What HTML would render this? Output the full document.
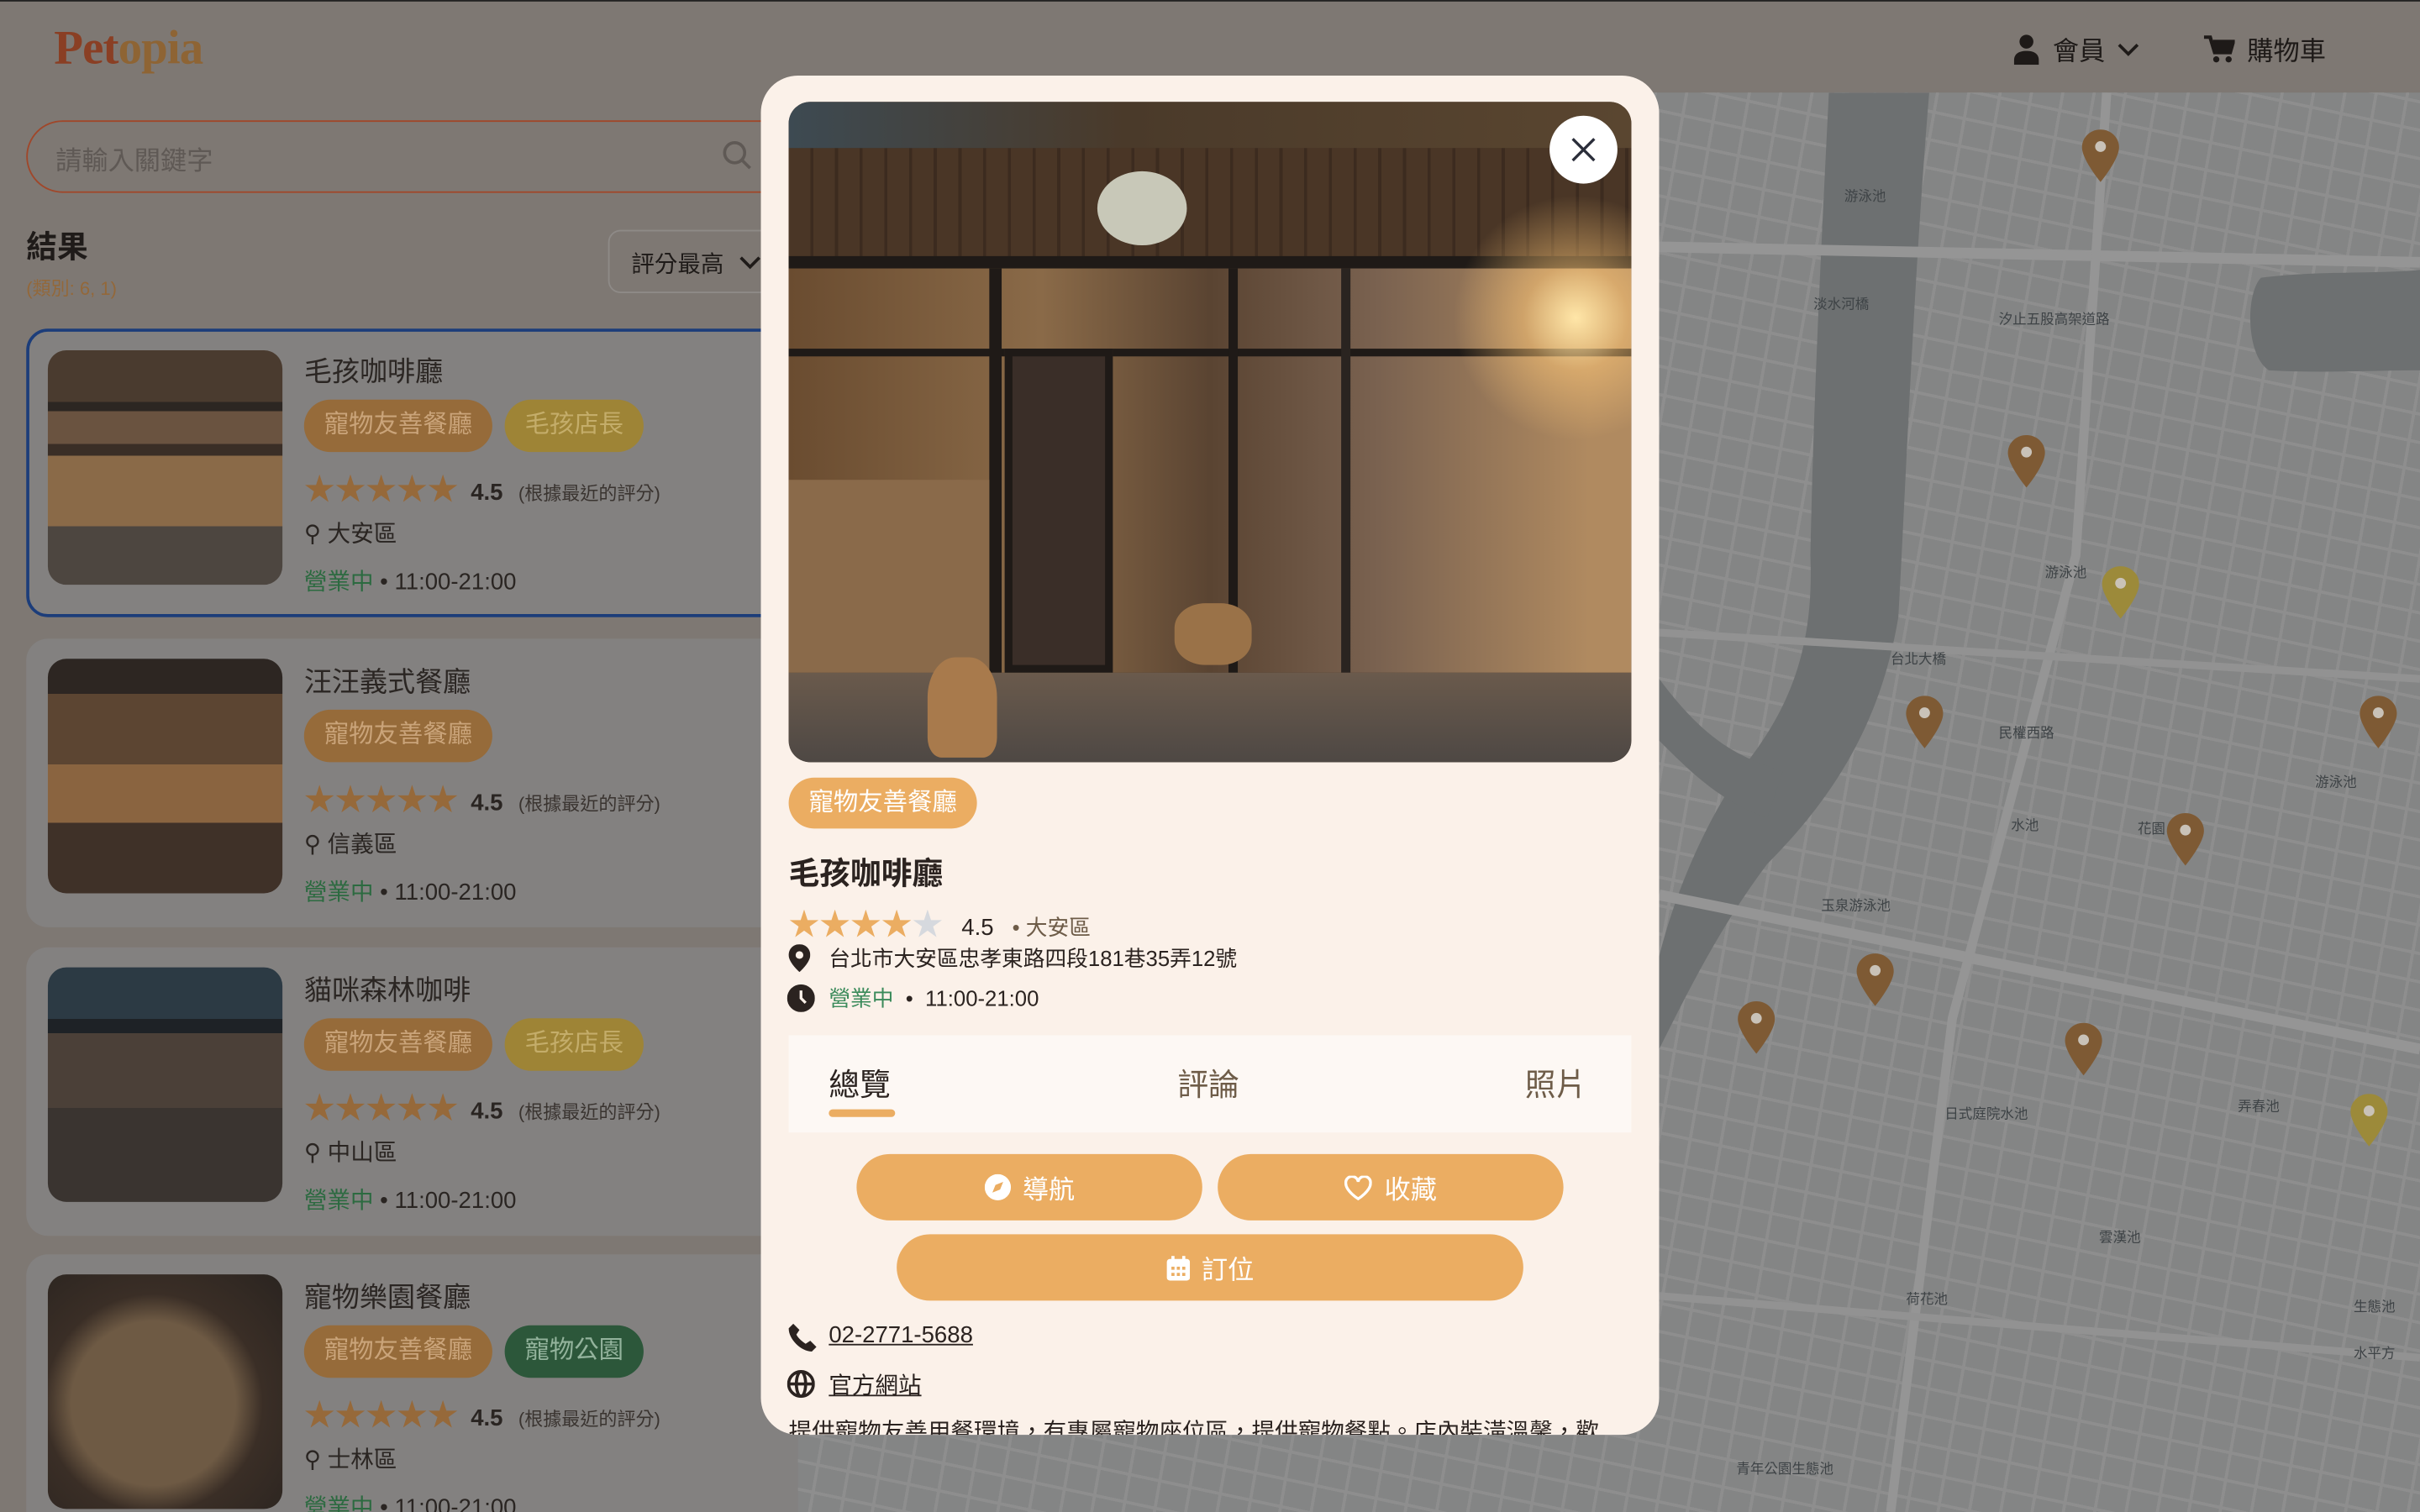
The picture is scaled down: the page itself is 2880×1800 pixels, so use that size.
<!DOCTYPE html>
<html><head><meta charset="utf-8">
<style>
*{box-sizing:border-box;margin:0;padding:0}
html,body{width:2880px;height:1800px;overflow:hidden;background:#7e7873}
#w{width:1568px;height:980px;transform:scale(1.836735);transform-origin:0 0;position:relative;font-family:"Liberation Sans","Noto Sans CJK TC",sans-serif;color:#2a2522;background:#7e7873;overflow:hidden}
.abs{position:absolute}
.map{left:505px;top:60px;width:1063px;height:920px;background:#848585;overflow:hidden;
background-image:repeating-linear-gradient(12deg,transparent 0 16px,#8e8e8e 16px 18px),repeating-linear-gradient(100deg,transparent 0 18px,#8e8e8e 18px 20px)}
.card{left:17px;width:500px;height:187px;background:#838180;border-radius:14px}
.thumb{left:14px;top:13px;width:152px;height:152px;border-radius:12px;overflow:hidden}
.nm{left:180px;top:14px;font-size:18px;color:#2b2623}
.tags{left:180px;top:46px;display:flex;gap:8px}
.tag{height:34px;line-height:34px;padding:0 13px;border-radius:17px;font-size:16px}
.to{background:#966b3a;color:#caa47a}.ty{background:#9e8436;color:#c4ad6a}.tg{background:#2c573a;color:#93b39c}
.st{left:180px;top:88px;font-size:20px;color:#96693a;letter-spacing:0}
.st b{color:#2a2522;font-size:15px;margin-left:8px;letter-spacing:0}
.st i{font-style:normal;color:#3a3430;font-size:12px;margin-left:10px;letter-spacing:0}
.ds{left:180px;top:122px;font-size:15px}
.hr{left:180px;top:153px;font-size:15px}
.hr span{color:#2c6a40}
.modal{left:493px;top:49px;width:582px;height:881px;background:#fbf1e9;border-radius:24px;overflow:hidden}
.btn{position:absolute;background:#ebad62;color:#fff;border-radius:22px;height:43px;display:flex;align-items:center;justify-content:center;gap:8px;font-size:17px}
</style></head><body><div id="w">
<div class="abs" style="left:0;top:0;width:1568px;height:1px;background:#222"></div>
<div class="abs" style="left:35px;top:13px;font-family:'Liberation Serif',serif;font-weight:bold;font-size:31px;color:#8a3f24;letter-spacing:-0.5px">Pet<span style="color:#8e6434">opia</span></div>
<div class="abs" style="left:1304px;top:19px;font-size:17px;display:flex;align-items:center;gap:8px;color:#1e1a18">
<svg width="18" height="20" viewBox="0 0 18 20"><circle cx="9" cy="5" r="4.5" fill="#1e1a18"/><path d="M1 20v-3c0-4 3-6 8-6s8 2 8 6v3z" fill="#1e1a18"/></svg>會員
<svg width="14" height="10" viewBox="0 0 14 10"><path d="M1 2l6 6 6-6" stroke="#1e1a18" stroke-width="2" fill="none"/></svg></div>
<div class="abs" style="left:1428px;top:19px;font-size:17px;display:flex;align-items:center;gap:8px;color:#1e1a18">
<svg width="20" height="18" viewBox="0 0 20 18"><path d="M0 1h4l3 10h10l2-7H6" stroke="#1e1a18" stroke-width="2.4" fill="none"/><path d="M5 4h14l-2 7H7z" fill="#1e1a18"/><circle cx="8" cy="15.5" r="2" fill="#1e1a18"/><circle cx="16" cy="15.5" r="2" fill="#1e1a18"/></svg>購物車</div>
<div class="abs map">
<svg width="1063" height="920" style="position:absolute;left:0;top:0">
<path d="M680 0 L745 0 C735 120 730 250 725 340 C715 400 690 450 640 500 C610 540 590 580 570 620 L570 560 C580 520 600 470 630 430 C660 390 670 350 668 300 C670 200 675 100 680 0Z" fill="#6d7071"/>
<path d="M570 380 C600 420 620 430 650 440 L640 470 C610 460 590 440 570 420Z" fill="#6d7071"/>
<path d="M960 120 C1000 115 1030 118 1063 115 L1063 180 C1030 180 1000 182 965 180 C950 170 950 130 960 120Z" fill="#6d7071"/>
<path d="M570 100 L1063 110" stroke="#959595" stroke-width="7" fill="none"/>
<path d="M570 520 L1063 620" stroke="#959595" stroke-width="7" fill="none"/>
<path d="M860 0 L840 300 L760 600 L720 920" stroke="#959595" stroke-width="6" fill="none"/>
<path d="M570 350 L1063 380" stroke="#929292" stroke-width="5" fill="none"/>
<path d="M570 780 L1063 820" stroke="#929292" stroke-width="5" fill="none"/>
<g font-size="9" fill="#3e4346" font-family="Noto Sans CJK TC">
<text x="690" y="70">游泳池</text><text x="820" y="314">游泳池</text><text x="720" y="370">台北大橋</text><text x="790" y="418">民權西路</text><text x="798" y="478">水池</text><text x="675" y="530">玉泉游泳池</text><text x="880" y="480">花園</text><text x="755" y="665">日式庭院水池</text><text x="945" y="660">弄春池</text><text x="855" y="745">雲漢池</text><text x="730" y="785">荷花池</text><text x="1020" y="820">水平方</text><text x="620" y="895">青年公園生態池</text><text x="995" y="450">游泳池</text><text x="1020" y="790">生態池</text><text x="670" y="140">淡水河橋</text><text x="790" y="150">汐止五股高架道路</text>
</g></svg>
</div>
<svg class="abs" style="left:0;top:0" width="1568" height="980">
<defs><g id="p"><path d="M0 0c-6.6 0-12 5-12 11.5 0 8 12 22.5 12 22.5s12-14.5 12-22.5C12 5 6.6 0 0 0z"/><circle cx="0" cy="11" r="3.5" fill="#c9c2b8"/></g></defs>
<g fill="#7e5a34"><use href="#p" x="1361" y="84"/><use href="#p" x="1313" y="282"/><use href="#p" x="1247" y="451"/><use href="#p" x="1541" y="451"/><use href="#p" x="1416" y="527"/><use href="#p" x="1215" y="618"/><use href="#p" x="1138" y="649"/><use href="#p" x="1350" y="663"/></g>
<g fill="#9c8a3a"><use href="#p" x="1374" y="367"/><use href="#p" x="1535" y="709"/></g>
</svg>
<div class="abs" style="left:17px;top:78px;width:500px;height:47px;border:1.5px solid #a0472a;border-radius:24px"></div>
<div class="abs" style="left:36px;top:90px;font-size:17px;color:#5f5955">請輸入關鍵字</div>
<svg class="abs" style="left:468px;top:91px" width="20" height="20" viewBox="0 0 20 20"><circle cx="8" cy="8" r="6.5" stroke="#5f5955" stroke-width="2" fill="none"/><path d="M13 13l5 5" stroke="#5f5955" stroke-width="2"/></svg>
<div class="abs" style="left:17px;top:144px;font-size:20px;font-weight:bold;color:#1f1b19">結果</div>
<div class="abs" style="left:17px;top:178px;font-size:12px;color:#93683a">(類別: 6, 1)</div>
<div class="abs" style="left:394px;top:149px;width:130px;height:41px;border:1px solid #8e8a87;border-radius:8px"></div>
<div class="abs" style="left:409px;top:160px;font-size:15px;color:#1f1b19">評分最高</div>
<svg class="abs" style="left:479px;top:165px" width="14" height="10" viewBox="0 0 14 10"><path d="M1 2l6 6 6-6" stroke="#1f1b19" stroke-width="2" fill="none"/></svg>

<div class="abs card" style="top:213px;border:2px solid #1c3d7a">
<div class="abs thumb" style="left:12px;top:12px;background:linear-gradient(#4a3b2f 0 22%,#2c2622 22% 26%,#6a5340 26% 40%,#3a2e26 40% 45%,#8a6a48 45% 75%,#4d4640 75%)"></div>
<div class="abs nm" style="left:178px;top:12px">毛孩咖啡廳</div>
<div class="abs tags" style="left:178px;top:44px"><div class="tag to">寵物友善餐廳</div><div class="tag ty">毛孩店長</div></div>
<div class="abs st" style="left:178px;top:86px">★★★★★<b>4.5</b><i>(根據最近的評分)</i></div>
<div class="abs ds" style="left:178px;top:120px">⚲ 大安區</div>
<div class="abs hr" style="left:178px;top:151px"><span>營業中</span> • 11:00-21:00</div>
</div>
<div class="abs card" style="top:414px">
<div class="abs thumb" style="background:linear-gradient(#2d2622 0 15%,#5c4532 15% 45%,#8a6440 45% 70%,#3f3128 70%)"></div>
<div class="abs nm">汪汪義式餐廳</div>
<div class="abs tags"><div class="tag to">寵物友善餐廳</div></div>
<div class="abs st">★★★★★<b>4.5</b><i>(根據最近的評分)</i></div>
<div class="abs ds">⚲ 信義區</div>
<div class="abs hr"><span>營業中</span> • 11:00-21:00</div>
</div>
<div class="abs card" style="top:614px">
<div class="abs thumb" style="background:linear-gradient(#2c3a44 0 22%,#1e2226 22% 28%,#4b4038 28% 60%,#3a3430 60%)"></div>
<div class="abs nm">貓咪森林咖啡</div>
<div class="abs tags"><div class="tag to">寵物友善餐廳</div><div class="tag ty">毛孩店長</div></div>
<div class="abs st">★★★★★<b>4.5</b><i>(根據最近的評分)</i></div>
<div class="abs ds">⚲ 中山區</div>
<div class="abs hr"><span>營業中</span> • 11:00-21:00</div>
</div>
<div class="abs card" style="top:813px">
<div class="abs thumb" style="background:radial-gradient(circle at 45% 55%,#6e5a44 0 45%,#3a2e26 60%,#2a2420)"></div>
<div class="abs nm">寵物樂園餐廳</div>
<div class="abs tags"><div class="tag to">寵物友善餐廳</div><div class="tag tg">寵物公園</div></div>
<div class="abs st">★★★★★<b>4.5</b><i>(根據最近的評分)</i></div>
<div class="abs ds">⚲ 士林區</div>
<div class="abs hr"><span>營業中</span> • 11:00-21:00</div>
</div>

<div class="abs modal">
<div class="abs" style="left:18px;top:17px;width:546px;height:428px;border-radius:14px;overflow:hidden;background:#3a2c22">
 <div class="abs" style="left:0;top:0;width:546px;height:30px;background:linear-gradient(90deg,#3d4a52,#4a3a2a 40%,#5a4630)"></div>
 <div class="abs" style="left:0;top:30px;width:546px;height:75px;background:repeating-linear-gradient(90deg,#4a3626 0 14px,#3c2b1f 14px 16px)"></div>
 <div class="abs" style="left:0;top:100px;width:546px;height:8px;background:#1f1a17"></div>
 <div class="abs" style="left:0;top:108px;width:546px;height:262px;background:linear-gradient(90deg,#6a4c30,#8a6a48 30%,#5a4432 50%,#7a6250 70%,#b08a60 95%)"></div>
 <div class="abs" style="left:0;top:160px;width:546px;height:5px;background:#1f1a17"></div>
 <div class="abs" style="left:130px;top:108px;width:8px;height:262px;background:#1f1a17"></div>
 <div class="abs" style="left:140px;top:160px;width:70px;height:210px;border:5px solid #1f1a17;background:#3a2e28"></div>
 <div class="abs" style="left:285px;top:108px;width:6px;height:262px;background:#1f1a17"></div>
 <div class="abs" style="left:358px;top:108px;width:6px;height:262px;background:#2a2420"></div>
 <div class="abs" style="left:0;top:245px;width:130px;height:125px;background:#8a6a4a"></div>
 <div class="abs" style="left:0;top:370px;width:546px;height:58px;background:linear-gradient(#6a5a4c,#4e4844)"></div>
 <div class="abs" style="left:200px;top:45px;width:58px;height:48px;border-radius:50%;background:#c8c8b8"></div>
 <div class="abs" style="left:90px;top:360px;width:45px;height:65px;border-radius:40% 40% 20% 20%;background:#a87a4c"></div>
 <div class="abs" style="left:250px;top:325px;width:50px;height:40px;border-radius:40%;background:#9a7248"></div>
 <div class="abs" style="left:430px;top:60px;width:160px;height:160px;border-radius:50%;background:radial-gradient(#ffe6a8 0,rgba(255,200,120,.5) 30%,transparent 70%)"></div>
</div>
<div class="abs" style="left:511px;top:26px;width:44px;height:44px;border-radius:50%;background:#fff"></div>
<svg class="abs" style="left:525px;top:40px" width="16" height="16"><path d="M1 1l14 14M15 1L1 15" stroke="#2b2e3a" stroke-width="1.8"/></svg>
<div class="abs" style="left:18px;top:455px;height:33px;line-height:33px;padding:0 13px;border-radius:17px;background:#ebad62;color:#fff;font-size:16px">寵物友善餐廳</div>
<div class="abs" style="left:18px;top:501px;font-size:20px;font-weight:bold;color:#2b2320">毛孩咖啡廳</div>
<div class="abs" style="left:18px;top:534px;font-size:20px;color:#ebad62;letter-spacing:0">★★★★<span style="color:#d6d9de">★</span><span style="color:#2b2320;font-size:15px;margin-left:12px">4.5</span><span style="color:#6e5c48;font-size:14px;margin-left:12px">• 大安區</span></div>
<svg class="abs" style="left:18px;top:563px" width="14" height="18" viewBox="0 0 14 18"><path d="M7 0C3 0 0 3 0 7c0 5 7 11 7 11s7-6 7-11C14 3 11 0 7 0z" fill="#2b2320"/><circle cx="7" cy="7" r="2.5" fill="#fbf1e9"/></svg>
<div class="abs" style="left:44px;top:562px;font-size:14px;color:#2b2320">台北市大安區忠孝東路四段181巷35弄12號</div>
<svg class="abs" style="left:17px;top:589px" width="18" height="18"><circle cx="9" cy="9" r="9" fill="#2b2320"/><path d="M9 4v5l3 3" stroke="#fbf1e9" stroke-width="1.8" fill="none"/></svg>
<div class="abs" style="left:44px;top:588px;font-size:14px;color:#2b2320"><span style="color:#3a8a5a">營業中</span> &nbsp;• &nbsp;11:00-21:00</div>
<div class="abs" style="left:18px;top:622px;width:546px;height:63px;background:#fdf8f4"></div>
<div class="abs" style="left:44px;top:638px;font-size:20px;color:#2b2320">總覽</div>
<div class="abs" style="left:44px;top:670px;width:43px;height:5px;border-radius:3px;background:#ebad62"></div>
<div class="abs" style="left:270px;top:638px;font-size:20px;color:#6e5c48">評論</div>
<div class="abs" style="left:495px;top:638px;font-size:20px;color:#6e5c48">照片</div>
<div class="btn" style="left:62px;top:699px;width:224px"><svg width="17" height="17"><circle cx="8.5" cy="8.5" r="8.5" fill="#fff"/><path d="M12 5L7 7 5 12l5-2z" fill="#ebad62"/></svg>導航</div>
<div class="btn" style="left:296px;top:699px;width:224px"><svg width="18" height="16" viewBox="0 0 18 16"><path d="M9 15S1 10 1 5a4 4 0 0 1 8-1 4 4 0 0 1 8 1c0 5-8 10-8 10z" stroke="#fff" stroke-width="1.8" fill="none"/></svg>收藏</div>
<div class="btn" style="left:88px;top:751px;width:406px"><svg width="15" height="16" viewBox="0 0 15 16"><rect x="0" y="2" width="15" height="14" rx="2" fill="#fff"/><rect x="3" y="0" width="2" height="4" fill="#fff"/><rect x="10" y="0" width="2" height="4" fill="#fff"/><g fill="#ebad62"><rect x="3" y="7" width="2" height="2"/><rect x="6.5" y="7" width="2" height="2"/><rect x="10" y="7" width="2" height="2"/><rect x="3" y="11" width="2" height="2"/><rect x="6.5" y="11" width="2" height="2"/><rect x="10" y="11" width="2" height="2"/></g></svg>訂位</div>
<svg class="abs" style="left:18px;top:809px" width="18" height="18" viewBox="0 0 18 18"><path d="M3 0l4 4-2 3c1 2 3 4 6 6l3-2 4 4-3 3C8 18 0 10 0 3z" fill="#2b2320"/></svg>
<div class="abs" style="left:44px;top:808px;font-size:15px;color:#2b2320;text-decoration:underline">02-2771-5688</div>
<svg class="abs" style="left:17px;top:839px" width="18" height="18" viewBox="0 0 18 18"><circle cx="9" cy="9" r="8" stroke="#2b2320" stroke-width="2" fill="none"/><ellipse cx="9" cy="9" rx="3" ry="8" stroke="#2b2320" stroke-width="2" fill="none"/><path d="M1 9h16" stroke="#2b2320" stroke-width="2"/></svg>
<div class="abs" style="left:44px;top:838px;font-size:15px;color:#2b2320;text-decoration:underline">官方網站</div>
<div class="abs" style="left:18px;top:868px;font-size:15px;color:#2b2320;white-space:nowrap">提供寵物友善用餐環境，有專屬寵物座位區，提供寵物餐點。店內裝潢溫馨，歡</div>
</div>
</div></body></html>
